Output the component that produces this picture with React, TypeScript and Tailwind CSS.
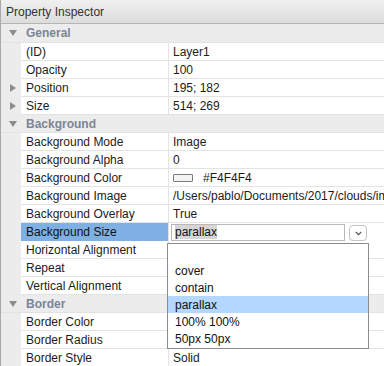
import React from "react";

const font = { fontFamily: '"Liberation Sans", Arial, Helvetica, sans-serif' };

function DownTri() {
  return (
    <svg width="8" height="6" viewBox="0 0 8 6" className="block">
      <path d="M0 0 L8 0 L4 6 Z" fill="#8d8d8d" />
    </svg>
  );
}
function RightTri() {
  return (
    <svg width="6" height="8" viewBox="0 0 6 8" className="block">
      <path d="M0 0 L6 4 L0 8 Z" fill="#8d8d8d" />
    </svg>
  );
}

function Header({ title, first }: { title: string; first?: boolean }) {
  return (
    <div
      className={`flex items-center bg-[#ececec] border-b border-[#e2e2e2] ${
        first ? "h-[19px]" : "h-[18px]"
      }`}
    >
      <div className="w-[20px] pl-[8px] flex items-center">
        <DownTri />
      </div>
      <div className="pl-[5px] text-[12px] font-bold text-[#7b8595]">{title}</div>
    </div>
  );
}

function Row({
  label,
  value,
  expand,
}: {
  label: string;
  value?: React.ReactNode;
  expand?: boolean;
}) {
  return (
    <div className="flex h-[18px] bg-[#ececec]">
      <div className="w-[20px] pl-[9px] flex items-center">{expand ? <RightTri /> : null}</div>
      <div className="w-[148px] flex items-center pl-[5px] border-r border-b border-[#e3e3e3] text-[12px] bg-white text-[#1c1c1c]">
        {label}
      </div>
      <div className="flex-1 flex items-center pl-[4px] bg-white border-b border-[#e3e3e3] text-[12px] text-[#1c1c1c] overflow-hidden whitespace-nowrap">
        {value}
      </div>
    </div>
  );
}

export default function App() {
  return (
    <div
      className="relative w-[384px] h-[366px] overflow-hidden bg-white flex flex-col border-l border-[#a9a9a9]"
      style={font}
    >
      <div className="h-[24px] shrink-0 flex items-center pl-[5px] bg-gradient-to-b from-[#f0f0f0] to-[#dcdcdc] border-b border-[#b5b5b5] text-[12px] text-[#333]">
        Property Inspector
      </div>
      <div className="flex flex-1 min-h-0">
        <div className="flex-1 flex flex-col">
          <Header title="General" first />
          <Row label="(ID)" value="Layer1" />
          <Row label="Opacity" value="100" />
          <Row label="Position" value="195; 182" expand />
          <Row label="Size" value="514; 269" expand />
          <Header title="Background" />
          <Row label="Background Mode" value="Image" />
          <Row label="Background Alpha" value="0" />
          <Row
            label="Background Color"
            value={
              <div className="flex items-center">
                <div className="w-[20px] h-[8px] border border-[#7a7a7a] bg-[#f4f4f4] rounded-[1px]" />
                <span className="ml-[10px]">#F4F4F4</span>
              </div>
            }
          />
          <Row label="Background Image" value="/Users/pablo/Documents/2017/clouds/image.png" />
          <Row label="Background Overlay" value="True" />
          <div className="flex h-[18px] bg-[#ececec]">
            <div className="w-[20px]" />
            <div className="w-[148px] flex items-center pl-[5px] bg-[#7eb0e3] text-[12px] text-[#111] border-r border-[#e3e3e3]">
              Background Size
            </div>
            <div className="flex-1 flex items-center bg-white pl-[2px] pr-[4px]">
              <div className="w-[174px] h-[17px] border border-[#b9b9b9] flex items-center pl-[3px] text-[12px] text-[#111]">
                <span className="bg-[#d6d6d6] leading-[14px]">parallax</span>
              </div>
              <div className="ml-[4px] mt-[2px] w-[18px] h-[16px] rounded-[4px] border border-[#c4c4c4] bg-white flex items-center justify-center shadow-[0_1px_0_rgba(0,0,0,0.05)]">
                <svg width="7" height="5" viewBox="0 0 7 5">
                  <path d="M0.8 1 L3.5 3.6 L6.2 1" stroke="#555" strokeWidth="1.2" fill="none" />
                </svg>
              </div>
            </div>
          </div>
          <Row label="Horizontal Alignment" value="" />
          <Row label="Repeat" value="" />
          <Row label="Vertical Alignment" value="" />
          <Header title="Border" />
          <Row label="Border Color" value="" />
          <Row label="Border Radius" value="" />
          <Row label="Border Style" value="Solid" />
        </div>
        <div className="w-[11px] shrink-0 bg-[#f3f3f3] border-l border-[#e6e6e6] pt-[4px] pl-[2px]">
          <div className="w-[6px] h-[244px] rounded-[3px] bg-[#c3c3c3]" />
        </div>
        <div className="w-[2px] shrink-0 bg-[#a9a9a9]" />
      </div>

      <div className="absolute left-[166px] top-[243px] w-[202px] h-[106px] bg-white border border-[#8c8c8c] pt-[1px] text-[12px] text-[#111]">
        <div className="h-[17px]" />
        <div className="h-[17px] flex items-center pl-[7px]">cover</div>
        <div className="h-[17px] flex items-center pl-[7px]">contain</div>
        <div className="h-[17px] flex items-center pl-[7px] bg-[#b3d7ff]">parallax</div>
        <div className="h-[17px] flex items-center pl-[7px]">100% 100%</div>
        <div className="h-[17px] flex items-center pl-[7px]">50px 50px</div>
      </div>
    </div>
  );
}
